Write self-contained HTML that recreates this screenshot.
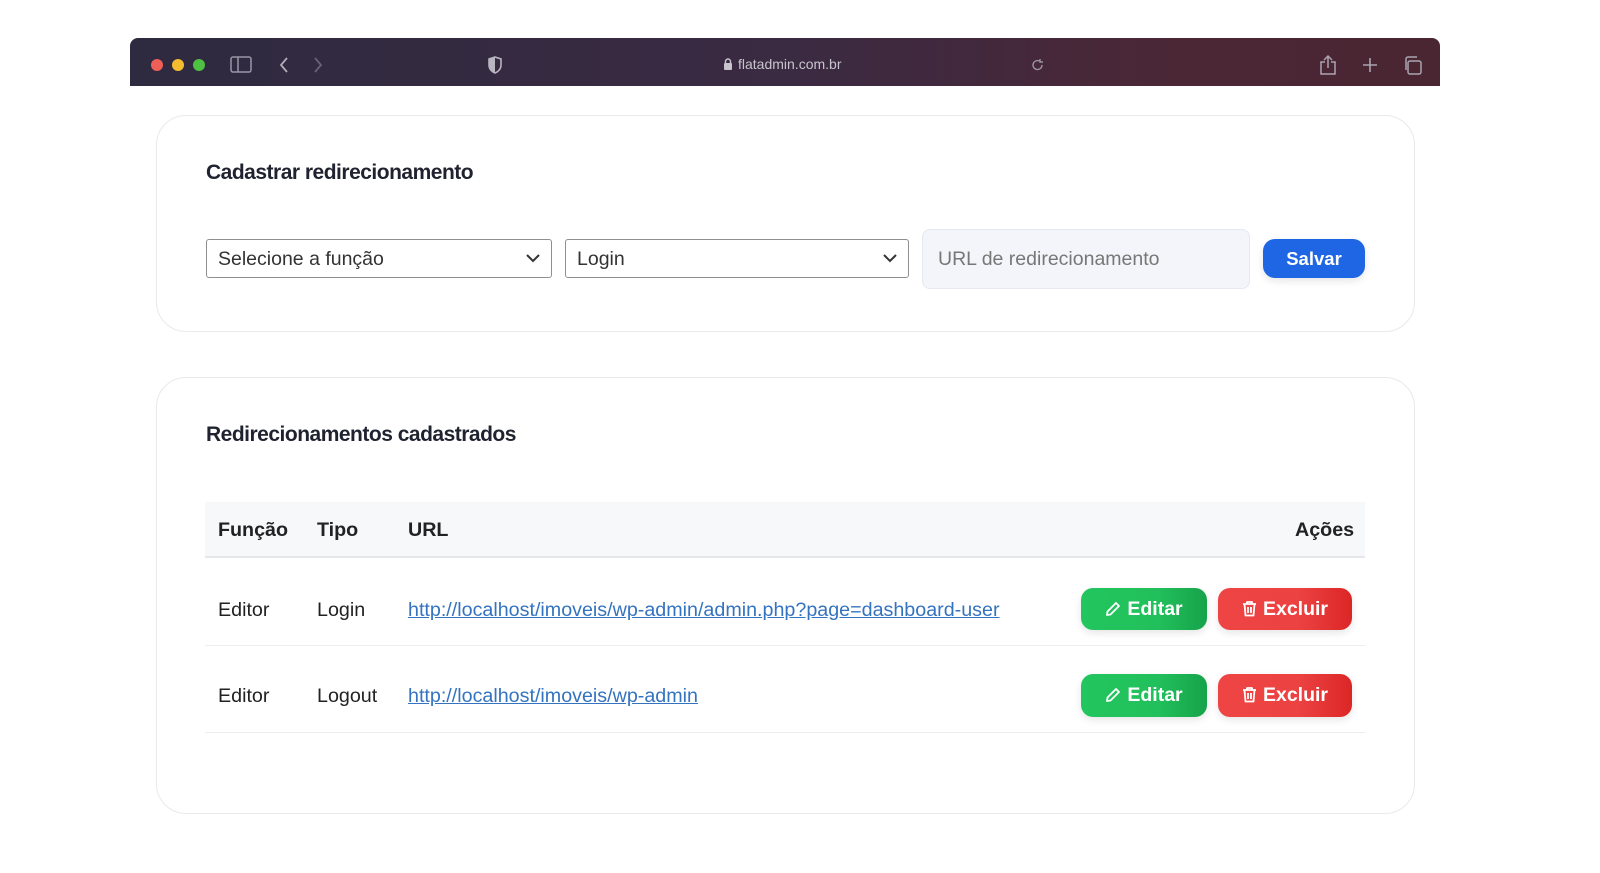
<!DOCTYPE html>
<html><head><meta charset="utf-8"><style>
*{box-sizing:border-box;margin:0;padding:0}
body{width:1600px;height:873px;background:#fff;font-family:"Liberation Sans",sans-serif;position:relative;overflow:hidden;color:#222}
.bar{position:absolute;left:130px;top:38px;width:1310px;height:48px;background:linear-gradient(90deg,#2e2a3f 0%,#3a2a42 50%,#4b2736 80%,#4a2632 100%);border-radius:8px 8px 0 0}
.dot{position:absolute;top:59px;width:12px;height:12px;border-radius:50%}
.card{position:absolute;left:156px;width:1259px;border:1.5px solid #e9e9ee;border-radius:30px;background:#fff}
h2{position:absolute;left:206px;font-size:21px;font-weight:bold;color:#1f2330;letter-spacing:-0.5px}
.sel{position:absolute;top:239px;height:39px;border:1.5px solid #8f8f8f;border-radius:3px;font-size:19.5px;padding:8px 11px;color:#333}
.sel svg{position:absolute;right:10px;top:13px}
.url{position:absolute;left:922px;top:229px;width:328px;height:60px;background:#f4f5fa;border:1px solid #e6e8f0;border-radius:8px;font-size:19.5px;color:#777;padding:18px 15px}
.btn{position:absolute;color:#fff;font-weight:bold;font-size:19.5px;border-radius:12px;text-align:center;box-shadow:0 3px 8px rgba(0,0,0,.1)}
.btn svg{vertical-align:-2px;margin-right:6px}
.th{position:absolute;top:502px;left:205px;width:1160px;height:56px;background:#f7f8fa;border-bottom:2px solid #e6e7eb}
.t{position:absolute;font-size:19.7px}
.b{font-weight:bold;color:#222}
a{color:#3473c0;text-decoration:underline}
.hr{position:absolute;left:205px;width:1160px;height:1px;background:#eceef1}
.g{background:linear-gradient(90deg,#22c55e,#22c05c 60%,#16a34a)}
.r{background:linear-gradient(90deg,#ef4444,#ec4242 60%,#dc2626)}
</style></head><body>
<div class="bar"></div>
<div class="dot" style="left:151px;background:#ee5f57"></div>
<div class="dot" style="left:172px;background:#f4bd2f"></div>
<div class="dot" style="left:193px;background:#4ec042"></div>
<svg style="position:absolute;left:230px;top:56px" width="22" height="17" viewBox="0 0 22 17" fill="none" stroke="#9a96a6" stroke-width="1.5"><rect x="1" y="1" width="20" height="15" rx="2"/><line x1="8" y1="1" x2="8" y2="16"/></svg>
<svg style="position:absolute;left:278px;top:56px" width="12" height="18" fill="none" stroke="#b0acb8" stroke-width="1.8"><path d="M9 2L3 9l6 7"/></svg>
<svg style="position:absolute;left:312px;top:56px" width="12" height="18" fill="none" stroke="#6a6274" stroke-width="1.8"><path d="M3 2l6 7-6 7"/></svg>
<svg style="position:absolute;left:487px;top:56px" width="16" height="18" viewBox="0 0 16 18"><path d="M8 1L2 3v6c0 4 3 7 6 8 3-1 6-4 6-8V3z" fill="none" stroke="#b8b4c0" stroke-width="1.6"/><path d="M8 1v16c-3-1-6-4-6-8V3z" fill="#b8b4c0"/></svg>
<svg style="position:absolute;left:723px;top:58px" width="10" height="13"><rect x="1" y="5" width="8" height="7" rx="1" fill="#c8c4cc"/><path d="M2.5 5V3.5a2.5 2.5 0 0 1 5 0V5" fill="none" stroke="#c8c4cc" stroke-width="1.4"/></svg>
<div style="position:absolute;left:738px;top:56px;font-size:14px;color:#c8c4cc">flatadmin.com.br</div>
<svg style="position:absolute;left:1031px;top:58px" width="14" height="14" fill="none" stroke="#9a94a0" stroke-width="1.4"><path d="M11 7a4.5 4.5 0 1 1-2-3.7M9 1v3h3"/></svg>
<svg style="position:absolute;left:1319px;top:54px" width="18" height="22" fill="none" stroke="#aaa4b0" stroke-width="1.5"><path d="M6 8H2v12h14V8h-4M9 14V2M5 6l4-4 4 4"/></svg>
<svg style="position:absolute;left:1362px;top:57px" width="16" height="16" stroke="#aaa4b0" stroke-width="1.6"><path d="M8 1v14M1 8h14"/></svg>
<svg style="position:absolute;left:1403px;top:56px" width="19" height="19" fill="none" stroke="#aaa4b0" stroke-width="1.5"><rect x="5" y="5" width="13" height="13" rx="2"/><path d="M3 14V3a2 2 0 0 1 2-2h9"/></svg>

<div class="card" style="top:115px;height:217px"></div>
<h2 style="top:161px">Cadastrar redirecionamento</h2>
<div class="sel" style="left:206px;width:346px">Selecione a função<svg width="16" height="10" fill="none" stroke="#333" stroke-width="2"><path d="M2 2l6 6 6-6"/></svg></div>
<div class="sel" style="left:565px;width:344px">Login<svg width="16" height="10" fill="none" stroke="#333" stroke-width="2"><path d="M2 2l6 6 6-6"/></svg></div>
<div class="url">URL de redirecionamento</div>
<div class="btn" style="left:1263px;top:239px;width:102px;height:39px;line-height:39px;background:#1f66e5;font-size:18.5px">Salvar</div>

<div class="card" style="top:377px;height:437px"></div>
<h2 style="top:423px">Redirecionamentos cadastrados</h2>
<div class="th"></div>
<div class="t b" style="left:218px;top:519px">Função</div>
<div class="t b" style="left:317px;top:519px">Tipo</div>
<div class="t b" style="left:408px;top:519px">URL</div>
<div class="t b" style="left:1295px;top:519px">Ações</div>

<div class="t" style="left:218px;top:599px">Editor</div>
<div class="t" style="left:317px;top:599px">Login</div>
<div class="t" style="left:408px;top:599px"><a>http://localhost/imoveis/wp-admin/admin.php?page=dashboard-user</a></div>
<div class="hr" style="top:645px"></div>
<div class="t" style="left:218px;top:685px">Editor</div>
<div class="t" style="left:317px;top:685px">Logout</div>
<div class="t" style="left:408px;top:685px"><a>http://localhost/imoveis/wp-admin</a></div>
<div class="hr" style="top:732px"></div>

<div class="btn g" style="left:1081px;top:588px;width:126px;height:42px;line-height:42px"><svg width="16" height="16" viewBox="0 0 16 16" fill="none" stroke="#fff" stroke-width="1.8" stroke-linejoin="round"><path d="M11 2l3 3-8.5 8.5L2 14l.5-3.5z"/></svg>Editar</div>
<div class="btn r" style="left:1218px;top:588px;width:134px;height:42px;line-height:42px"><svg width="15" height="17" viewBox="0 0 15 17" fill="none" stroke="#fff" stroke-width="1.8" stroke-linejoin="round"><path d="M1 4h13M5 4V2h5v2M2.5 4l1 11.5h8l1-11.5M6 7v6M9 7v6"/></svg>Excluir</div>
<div class="btn g" style="left:1081px;top:674px;width:126px;height:43px;line-height:43px"><svg width="16" height="16" viewBox="0 0 16 16" fill="none" stroke="#fff" stroke-width="1.8" stroke-linejoin="round"><path d="M11 2l3 3-8.5 8.5L2 14l.5-3.5z"/></svg>Editar</div>
<div class="btn r" style="left:1218px;top:674px;width:134px;height:43px;line-height:43px"><svg width="15" height="17" viewBox="0 0 15 17" fill="none" stroke="#fff" stroke-width="1.8" stroke-linejoin="round"><path d="M1 4h13M5 4V2h5v2M2.5 4l1 11.5h8l1-11.5M6 7v6M9 7v6"/></svg>Excluir</div>
</body></html>
